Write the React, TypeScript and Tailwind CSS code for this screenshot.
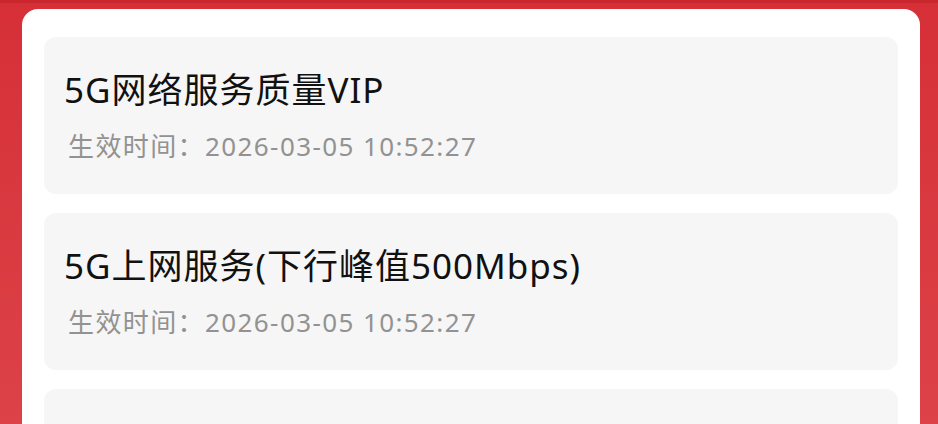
import React from "react";

interface Benefit {
  id: number;
  title: string;
  effectiveAt: string;
}

const benefits: Benefit[] = [
  { id: 1, title: "5G网络服务质量VIP", effectiveAt: "2026-03-05 10:52:27" },
  { id: 2, title: "5G上网服务(下行峰值500Mbps)", effectiveAt: "2026-03-05 10:52:27" },
  { id: 3, title: "5G视频彩铃", effectiveAt: "2026-03-05 10:52:27" },
];

const BenefitCard: React.FC<{ item: Benefit }> = ({ item }) => (
  <li className="flex flex-col rounded-[12px] bg-[#f6f6f6] pl-[20px] pt-[31px] h-[157px] shrink-0 overflow-hidden">
    <span className="text-[35px] leading-[44px] tracking-[1px] text-[#111111] whitespace-nowrap">
      {item.title}
    </span>
    <p className="mt-[17px] pl-[4px] text-[26px] leading-[34px] tracking-[1.4px] text-[#929292] whitespace-nowrap">
      生效时间：{item.effectiveAt}
    </p>
  </li>
);

export default function App() {
  return (
    <div
      className="h-[424px] w-[938px] overflow-hidden bg-gradient-to-b from-[#d62f37] to-[#dc4248] border-t-[3px] border-[#c9262d] pt-[6px] px-[18px]"
      style={{ fontFamily: '"Noto Sans", "Noto Sans CJK SC", sans-serif' }}
    >
      <div className="ml-[4px] w-[898px] h-[500px] rounded-t-[16px] bg-white px-[22px] pt-[28px]">
        <ul className="flex flex-col gap-[19px]">
          {benefits.map(b => (
            <BenefitCard key={b.id} item={b} />
          ))}
        </ul>
      </div>
    </div>
  );
}
